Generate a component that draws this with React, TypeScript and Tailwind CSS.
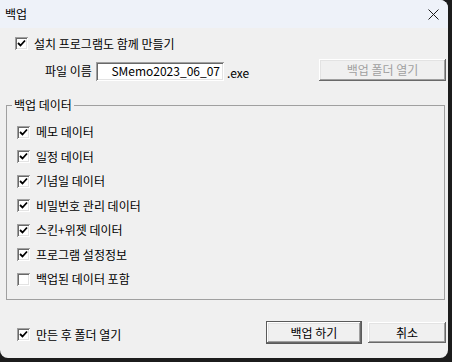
import React from 'react';

const font = { fontFamily: '"Noto Sans CJK KR", "Noto Sans", sans-serif' };

function CheckBox({ checked, label }: { checked: boolean; label: string }) {
  return (
    <div className="flex items-center gap-[6px]">
      <span className="flex h-[13px] w-[13px] items-center justify-center bg-white shadow-[inset_1px_1px_#a0a0a0,inset_-1px_-1px_#ffffff,inset_2px_2px_#696969,inset_-2px_-2px_#e3e3e3]">
        {checked && (
          <svg width="9" height="9" viewBox="0 0 9 9">
            <path d="M1 4 L3.5 6.5 L8 1.5" stroke="#000" strokeWidth="1.8" fill="none" />
          </svg>
        )}
      </span>
      <span className="text-[12px] leading-none text-black">{label}</span>
    </div>
  );
}

function Button({ label, primary, disabled, className }: { label: string; primary?: boolean; disabled?: boolean; className: string }) {
  return (
    <div
      className={`flex items-center justify-center bg-[#f0f0f0] text-[12px] leading-none shadow-[inset_-1px_-1px_#696969,inset_1px_1px_#ffffff,inset_-2px_-2px_#a0a0a0,inset_2px_2px_#e3e3e3] ${
        primary ? 'outline outline-1 outline-[#5a5a5a]' : ''
      } ${disabled ? 'text-[#a0a0a0]' : 'text-black'} ${className}`}
    >
      {label}
    </div>
  );
}

export default function App() {
  const items: [string, boolean][] = [
    ['메모 데이터', true],
    ['일정 데이터', true],
    ['기념일 데이터', true],
    ['비밀번호 관리 데이터', true],
    ['스킨+위젯 데이터', true],
    ['프로그램 설정정보', true],
    ['백업된 데이터 포함', false],
  ];

  return (
    <div className="h-[362px] w-[452px] bg-[#1c1c1c]" style={font}>
      <div className="flex h-[358px] w-[448px] flex-col overflow-hidden rounded-tr-[8px] rounded-br-[8px] rounded-bl-[8px] bg-[#f0f0f0]">
        {/* title bar */}
        <div className="flex h-[28px] shrink-0 items-center justify-between bg-[#eef2f9] pl-[5px] pr-[9px]">
          <span className="text-[12px] text-black">백업</span>
          <svg width="11" height="11" viewBox="0 0 11 11">
            <path d="M0.5 0.5 L10.5 10.5 M10.5 0.5 L0.5 10.5" stroke="#1a1a1a" strokeWidth="1" />
          </svg>
        </div>

        <div className="pl-[15px] pt-[9px]">
          <CheckBox checked label="설치 프로그램도 함께 만들기" />
        </div>

        <div className="mt-[11px] flex items-center">
          <span className="ml-[45px] w-[51px] text-[12px] leading-none">파일 이름</span>
          <div className="flex h-[19px] w-[128px] items-center justify-end bg-white pr-[4px] text-[12px] leading-none shadow-[inset_1px_1px_#a0a0a0,inset_-1px_-1px_#ffffff,inset_2px_2px_#696969,inset_-2px_-2px_#e3e3e3]">
            SMemo2023_06_07
          </div>
          <span className="ml-[3px] mt-[3px] text-[12px] leading-none">.exe</span>
          <Button label="백업 폴더 열기" disabled className="ml-auto mr-[2px] -mt-[2px] h-[22px] w-[127px]" />
        </div>

        {/* group box */}
        <div className="relative mx-[6px] mt-[24px] h-[195px] w-[439px] border border-[#a0a0a0]">
          <span className="absolute -top-[8px] left-[5px] bg-[#f0f0f0] px-[2px] text-[12px] leading-[14px]">백업 데이터</span>
          <div className="flex flex-col pl-[10px] pt-[14px]">
            {items.map(([label, checked]) => (
              <div key={label} className="flex h-[24.5px] items-center">
                <CheckBox checked={checked} label={label} />
              </div>
            ))}
          </div>
        </div>

        <div className="mt-[22px] flex items-center pr-[2px]">
          <div className="pl-[17px] pt-[4px]">
            <CheckBox checked label="만든 후 폴더 열기" />
          </div>
          <Button label="백업 하기" primary className="ml-auto h-[21px] w-[94px]" />
          <Button label="취소" className="ml-[7px] h-[21px] w-[78px]" />
        </div>
      </div>
    </div>
  );
}
